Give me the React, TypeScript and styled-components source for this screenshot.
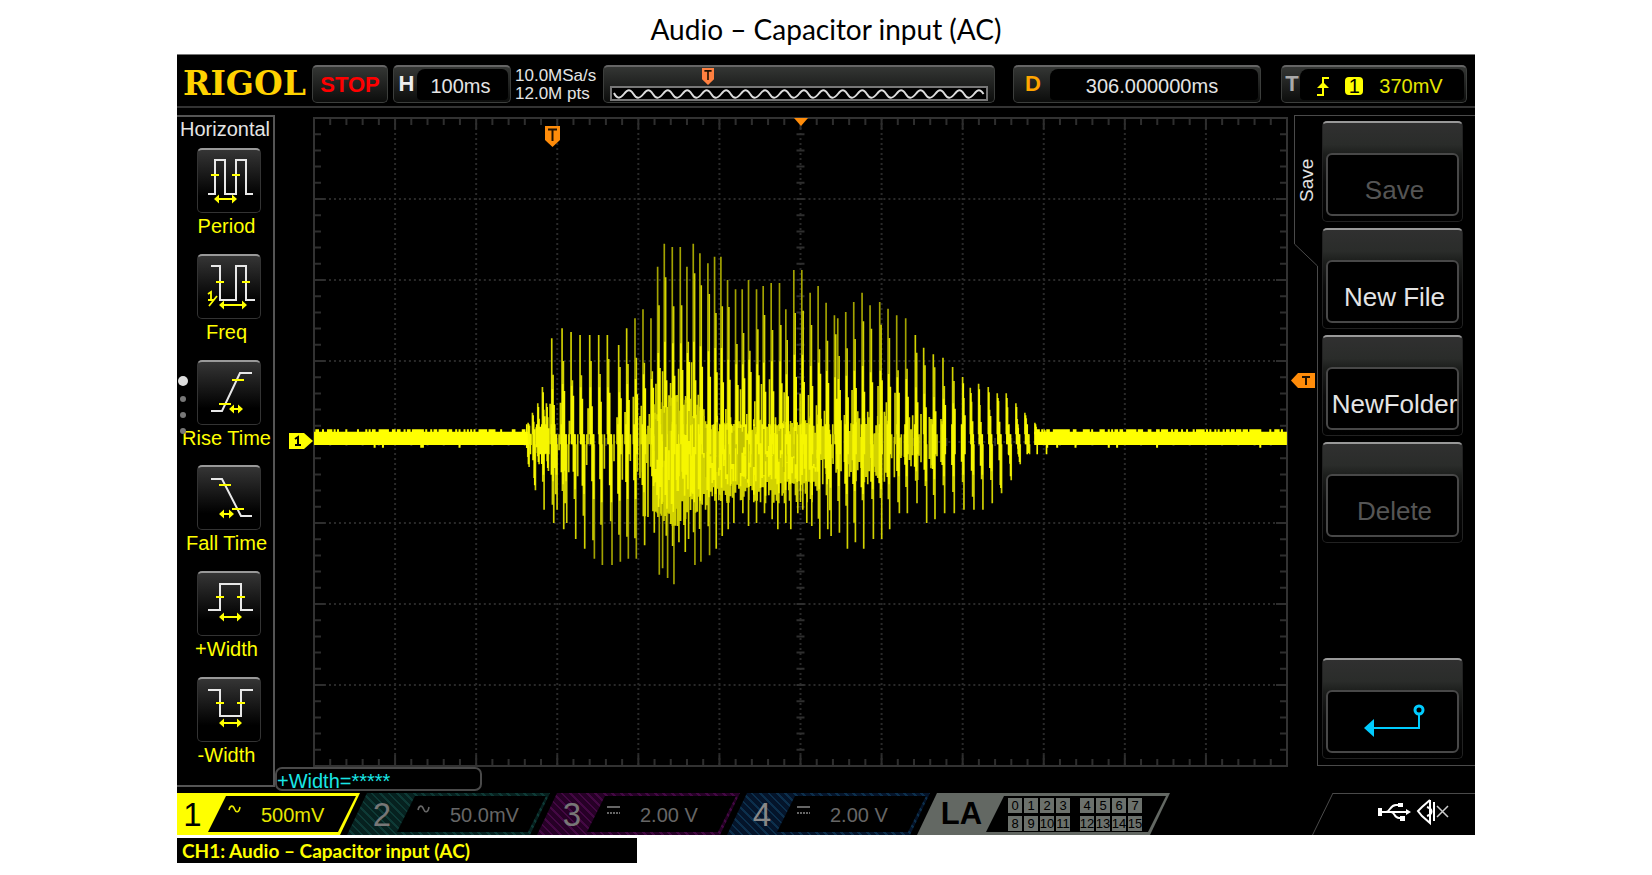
import React from "react";
import styled, { createGlobalStyle } from "styled-components";

const yellow = "#ffff00";
const orange = "#ff8c0a";
const line = "#4a4a4a";

const GlobalStyle = createGlobalStyle`
  *, *::before, *::after { box-sizing: border-box; }
  body {
    margin: 0;
    background: #fff;
    font-family: "Liberation Sans", Arial, sans-serif;
  }
  button { font: inherit; color: inherit; margin: 0; padding: 0; border: 0; background: none; }
  svg { display: block; }
`;

const Page = styled.main`
  display: flex;
  flex-direction: column;
  min-height: 100vh;
  padding: 0 177px;
`;

const Title = styled.h1`
  margin: 0;
  height: 54px;
  text-align: center;
  font: 400 28px/58px Lato, Carlito, sans-serif;
  color: #000;
`;

const Screen = styled.section`
  display: flex;
  flex-direction: column;
  background: #000;
  border-top: 1px solid #777;
  color: #e4e4e4;
  font-size: 20px;
`;

/* ---------- top bar ---------- */

const TopBar = styled.header`
  display: flex;
  align-items: flex-end;
  height: 53px;
  padding: 0 8px 3px 6px;
  border-bottom: 2px solid #333;
`;

const Logo = styled.div`
  width: 129px;
  color: #ffd200;
  font: 700 33px/38px "DejaVu Serif", serif;
`;

const Box = styled.div`
  display: flex;
  align-items: stretch;
  height: 38px;
  padding: 2px;
  border: 1px solid #3c3e3c;
  border-top: 2px solid #666;
  border-radius: 5px;
  background: linear-gradient(#343634, #0c0d0c);
`;

const StopButton = styled(Box).attrs({ as: "button", type: "button" })`
  width: 76px;
  align-items: center;
  justify-content: center;
  color: #ff0000;
  font-weight: 700;
  font-size: 22px;
  line-height: 30px;
`;

const ReadingBox = styled(Box)<{ $width: number; $gap: number }>`
  width: ${(p) => p.$width}px;
  margin-left: ${(p) => p.$gap}px;
`;

const BoxTag = styled.span<{ $color: string; $width: number }>`
  width: ${(p) => p.$width}px;
  text-align: center;
  color: ${(p) => p.$color};
  font-weight: 700;
  font-size: 22px;
  line-height: 30px;
`;

const BoxValue = styled.span<{ $color?: string }>`
  display: flex;
  flex: 1;
  align-items: center;
  justify-content: center;
  gap: 16px;
  padding: 3px 4px 0 0;
  border-radius: 8px 6px 4px 4px;
  background: #000;
  color: ${(p) => p.$color ?? "#e4e4e4"};
  line-height: 30px;
`;

const SampleInfo = styled.div`
  width: 92px;
  padding-left: 4px;
  font-size: 17px;
  line-height: 18px;
  white-space: nowrap;
`;

const MemoryBox = styled(Box)`
  position: relative;
  flex: 1;
  align-items: flex-end;
  padding: 0 6px 1px;
`;

const MemoryTrigger = styled.svg`
  position: absolute;
  left: 25%;
  top: 1px;
`;

const SourceBadge = styled.span`
  width: 18px;
  border-radius: 4px;
  background: ${yellow};
  color: #000;
  line-height: 18px;
  text-align: center;
`;

/* ---------- middle ---------- */

const Middle = styled.div`
  display: flex;
  height: 685px;
`;

const Sidebar = styled.nav`
  position: relative;
  display: flex;
  flex-direction: column;
  width: 98px;
  margin: 7px 0 6px;
  border: 2px solid #555;
  border-left: 0;
`;

const SidebarTitle = styled.h2`
  margin: 0;
  padding-left: 3px;
  height: 31px;
  font-size: 20px;
  font-weight: 400;
  line-height: 24px;
  white-space: nowrap;
`;

const MeasureList = styled.div`
  display: flex;
  flex: 1;
  flex-direction: column;
  justify-content: space-between;
  padding-bottom: 17px;
`;

const MeasureButton = styled.button`
  display: flex;
  flex-direction: column;
  align-items: center;
  color: ${yellow};
  line-height: 26px;
  white-space: nowrap;
`;

const IconTile = styled.span`
  width: 64px;
  height: 65px;
  margin-left: 7px;
  border: 1px solid #333;
  border-top: 2px solid #999;
  border-radius: 5px;
  background: linear-gradient(#353535, #000 75%);
`;

const MeasureName = styled.span`
  padding-left: 3px;
`;

const PageDots = styled.div`
  position: absolute;
  left: 1px;
  top: 259px;
  display: flex;
  flex-direction: column;
  align-items: center;
  gap: 10px;
`;

const Dot = styled.i<{ $active?: boolean }>`
  width: ${(p) => (p.$active ? 10 : 6)}px;
  height: ${(p) => (p.$active ? 10 : 6)}px;
  border-radius: 50%;
  background: ${(p) => (p.$active ? "#ddd" : "#777")};
`;

const PlotColumn = styled.div`
  display: flex;
  flex: 1;
  flex-direction: column;
  padding-top: 9px;
`;

const Plot = styled.div`
  position: relative;
  height: 650px;
  margin: 0 6px 0 38px;
`;

const Marker = styled.svg<{ $left: string; $top: number }>`
  position: absolute;
  left: ${(p) => p.$left};
  top: ${(p) => p.$top}px;
`;

const Readout = styled.output`
  width: 207px;
  height: 24px;
  border: 2px solid #4a4a4a;
  border-radius: 7px;
  color: #19e6e6;
  line-height: 24px;
`;

/* ---------- soft-key menu ---------- */

const Menu = styled.aside`
  display: flex;
  width: 181px;
  margin: 7px 0 27px;
`;

const MenuTab = styled.div`
  display: flex;
  flex-direction: column;
  width: 24px;
`;

/* The label is turned half round, so its right and bottom borders show at the left and top. */
const MenuTabLabel = styled.h2`
  height: 129px;
  margin: 0;
  border: 0 solid ${line};
  border-width: 0 1px 1px 0;
  font-size: 19px;
  font-weight: 400;
  line-height: 23px;
  text-align: center;
  writing-mode: vertical-rl;
  transform: rotate(180deg);
`;

const MenuTabEdge = styled.div`
  flex: 1;
  border-right: 1px solid ${line};
`;

const MenuKeys = styled.div`
  display: flex;
  flex: 1;
  min-width: 0;
  flex-direction: column;
  gap: 6px;
  padding: 5px 12px 6px 4px;
  border: 1px solid ${line};
  border-width: 1px 0;
`;

const SoftKey = styled.button<{ $last?: boolean }>`
  display: flex;
  height: 101px;
  margin-top: ${(p) => (p.$last ? "auto" : 0)};
  padding: 30px 3px 4px;
  border: 1px solid #222;
  border-top: 2px solid #999;
  border-radius: 5px;
  background: linear-gradient(#303030, #2a2c2a 22%, #1c1e1c 32%, #0a0a0a 60%, #000);
  color: #e4e4e4;
  font-size: 26px;
  &:disabled { color: #555; }
`;

const SoftKeyFace = styled.span`
  display: flex;
  flex: 1;
  min-width: 0;
  height: 63px;
  align-items: center;
  justify-content: center;
  padding: 11px 0 0 4px;
  border: 2px solid #484848;
  border-radius: 6px;
  background: #000;
  white-space: nowrap;
`;

/* ---------- channel bar ---------- */

const ChannelBar = styled.footer`
  display: flex;
  height: 42px;
`;

const ChannelShape = styled.button<{ $fill: string; $first?: boolean; $width: number }>`
  display: flex;
  width: ${(p) => p.$width}px;
  height: 42px;
  margin-left: ${(p) => (p.$first ? 0 : -13)}px;
  padding: 3px 4px 3px 0;
  background: ${(p) => p.$fill};
  clip-path: polygon(${(p) => (p.$first ? 0 : 20)}px 0, 100% 0, calc(100% - 20px) 100%, 0 100%);
`;

const ChannelNumber = styled.span<{ $color: string; $first?: boolean }>`
  width: ${(p) => (p.$first ? 31 : 50)}px;
  padding-left: ${(p) => (p.$first ? 0 : 20)}px;
  color: ${(p) => p.$color};
  font-size: 33px;
  line-height: 38px;
  text-align: center;
`;

const ChannelBody = styled.span<{ $color: string }>`
  display: flex;
  flex: 1;
  height: 36px;
  gap: 20px;
  padding-left: 20px;
  background: #000;
  clip-path: polygon(18px 0, 100% 0, calc(100% - 18px) 100%, 0 100%);
  color: ${(p) => p.$color};
  line-height: 38px;
`;

const LogicName = styled.span`
  width: 69px;
  padding-left: 20px;
  color: #000;
  font-size: 31px;
  font-weight: 700;
  line-height: 36px;
`;

const LogicBody = styled.span`
  display: grid;
  flex: 1;
  grid-template-columns: repeat(4, 14px) 6px repeat(4, 14px);
  gap: 3px 2px;
  align-content: center;
  padding-left: 22px;
  background: #000;
  clip-path: polygon(18px 0, 100% 0, calc(100% - 18px) 100%, 0 100%);
`;

const Bit = styled.span<{ $column: number }>`
  display: flex;
  grid-column: ${(p) => p.$column};
  height: 15px;
  justify-content: center;
  background: #6c716c;
  color: #000;
  font-size: 13px;
  line-height: 15px;
`;

const Status = styled.div`
  display: flex;
  align-items: stretch;
  margin-left: auto;
  width: 163px;
`;

const StatusIcons = styled.div`
  display: flex;
  flex: 1;
  gap: 5px;
  padding: 3px 0 0 45px;
  border-top: 1px solid ${line};
`;

const Caption = styled.p`
  width: 460px;
  max-width: 100%;
  margin: 3px 0 0;
  padding-left: 5px;
  background: #000;
  color: ${yellow};
  font: 700 19px/25px Lato, Carlito, sans-serif;
`;

/* ---------- drawings ---------- */

const Arrow = ({ from, to, y }: { from: number; to: number; y: number }) => (
  <g>
    <path d={`M${from + 3} ${y}H${to - 3}`} stroke={yellow} strokeWidth="2" />
    <path
      d={`M${from} ${y}l5 -4.500v9zM${to} ${y}l-5 -4.500v9z`}
      fill={yellow}
    />
  </g>
);

type Measure = {
  name: string;
  wave: string;
  ticks: string;
  arrow: [number, number, number];
  inverse?: boolean;
};

const measures: Measure[] = [
  { name: "Period", wave: "M11 46H18V12H28V46H39V12H49V46H56", ticks: "M14 27h8M35 27h8", arrow: [17, 40, 51] },
  { name: "Freq", wave: "M14 12H23V46H39V12H49V46H58", ticks: "M19 28h8M45 28h8", arrow: [22, 50, 51], inverse: true },
  { name: "Rise Time", wave: "M14 51H25L43 13H55", ticks: "M35 20h12M22 44h12", arrow: [32, 46, 49] },
  { name: "Fall Time", wave: "M14 14H25L44 51H55", ticks: "M22 20h12M35 44h12", arrow: [22, 37, 49] },
  { name: "+Width", wave: "M11 39H23V13H44V39H56", ticks: "M19 26h8M40 26h8", arrow: [22, 45, 46] },
  { name: "-Width", wave: "M11 13H23V39H44V13H56", ticks: "M19 26h8M40 26h8", arrow: [22, 45, 46] },
];

const MeasureIcon = ({ m }: { m: Measure }) => (
  <svg width="62" height="62" viewBox="1 2 62 62" fill="none" aria-hidden="true">
    <path d={m.wave} stroke="#e8e8e8" strokeWidth="2" />
    <path d={m.ticks} stroke={yellow} strokeWidth="2" />
    <Arrow from={m.arrow[0]} to={m.arrow[1]} y={m.arrow[2]} />
    {m.inverse && (
      <path d="M11 40l3 -2v8M11 46h6M12 52l8 -10" stroke={yellow} strokeWidth="1.800" />
    )}
  </svg>
);

/* Spike extremes of the captured burst as x, y pairs. */
const peaks = [
  55, 575, 68, 545, 84, 517, 98, 468, 110, 517, 126, 322, 157, 292, 184, 303, 211, 312, 240, 312, 267, 312,
  293, 312, 327, 342, 351, 292, 376, 262, 400, 235, 424, 262, 444, 107, 464, 38, 488, 48, 512, 48, 532, 107,
  551, 38, 571, 67, 595, 97, 615, 77, 634, 77, 654, 147, 678, 175, 698, 175, 717, 147, 741, 175, 761, 165,
  785, 156, 810, 156, 829, 235, 853, 117, 877, 117, 902, 185, 926, 165, 950, 215, 975, 253, 985, 262, 1009,
  243, 1033, 213, 1058, 185, 1082, 223, 1111, 213, 1136, 233, 1162, 253, 1189, 262, 1218, 312, 1243, 350,
  1272, 370, 1301, 380, 1330, 408, 1360, 438, 1383, 470, 1408, 458, 1437, 468, 1464, 487, 1491, 487, 1520,
  517, 1547, 545, 1577, 575, 1605, 595,
];
const troughs = [
  58, 708, 77, 778, 88, 700, 103, 836, 116, 720, 132, 876, 142, 836, 162, 895, 171, 876, 198, 924, 225, 953,
  254, 983, 278, 1002, 307, 1002, 332, 992, 356, 983, 380, 983, 405, 943, 434, 905, 449, 1031, 459, 1012,
  474, 1041, 493, 1060, 508, 934, 527, 963, 537, 924, 556, 1002, 574, 992, 600, 973, 620, 953, 638, 915,
  656, 895, 673, 876, 700, 847, 717, 885, 741, 876, 765, 847, 788, 865, 805, 895, 829, 876, 844, 895, 865,
  847, 880, 836, 892, 876, 907, 885, 931, 924, 955, 895, 965, 915, 990, 905, 1014, 953, 1038, 934, 1063, 953,
  1092, 924, 1117, 924, 1141, 895, 1170, 847, 1194, 847, 1223, 817, 1252, 876, 1277, 865, 1306, 847, 1335,
  847, 1364, 836, 1394, 836, 1421, 836, 1449, 817, 1477, 787, 1506, 748, 1533, 700, 1561, 670,
];

const noise = (n: number) => {
  const v = Math.sin(n * 12.9898) * 43758.5453;
  return v - Math.floor(v);
};

const bar = (x: number, y1: number, y2: number) => `M${x} ${Math.round(y1)}V${Math.round(y2)}`;

const buildTrace = () => {
  const tips: string[] = [];
  const flanks: string[] = [];
  const bright: string[] = [];
  const shade: string[] = [];
  const mid = 625;

  const addSpikes = (points: number[], down: boolean) => {
    for (let i = 0; i < points.length; i += 2) {
      const x = points[i];
      const d = points[i + 1] - mid;
      const over = down ? -15 : 15;
      const small = Math.abs(d) < 190;
      (Math.abs(d) < 345 ? flanks : tips).push(bar(x, mid + d, mid - over));
      flanks.push(bar(x + (down ? -4 : 4), mid + d * (0.55 + noise(x) * 0.3), mid + over));
      bright.push(bar(x + (down ? -2 : 2), mid + d * (small ? 0.9 : 0.5), mid + over));
      bright.push(bar(x + (down ? -7 : 7), mid + d * (0.3 + noise(x + 3) * 0.15), mid + over * 3));
      if (x < 1300 && noise(x + 4) > 0.3) {
        flanks.push(bar(x + (down ? 6 : -5), mid + d * (0.15 + noise(x + 9) * 0.25), mid + over));
      }
    }
  };
  addSpikes(peaks, false);
  addSpikes(troughs, true);

  /* The dense body of the burst, where neighbouring cycles overlap. */
  for (let x = 383; x < 433; x += 8) {
    flanks.push(bar(x, 540 + noise(x) * 70, 700 + noise(x + 1) * 180));
  }
  for (let x = 433; x < 925; x += 5) {
    const early = Math.max(0, 1 - Math.abs(x - 490) / 130);
    const t = 550 - early * 80 + noise(x) * 60;
    const b = 750 + early * 70 + noise(x + 1) * 70;
    flanks.push(bar(x, t, b));
    if (noise(x + 5) > 0.5 - (x - 433) / 2500) {
      bright.push(bar(x, t + 60 + noise(x + 3) * 60, b - 20 - 90 * noise(x + 6)));
    }
    if (noise(x + 7) > 0.7) shade.push(bar(x, t + 20, t + 70 + noise(x + 8) * 120));
  }
  for (let x = 925; x < 1310; x += 5) {
    if (noise(x + 2) > 0.1 + (x - 925) / 900) {
      flanks.push(bar(x, 540 + noise(x) * 80, 670 + noise(x + 1) * 90));
    }
  }
  return { tips: tips.join(""), flanks: flanks.join(""), bright: bright.join(""), shade: shade.join("") };
};

const buildBaseline = () => {
  const out: string[] = [];
  for (let x = -586; x < 2334; x += 5) {
    if (x > 50 && x < 1580) continue;
    if (noise(x) > 0.45) out.push(bar(x, 595, 610));
    if (noise(x) > 0.97) out.push(bar(x, 630, 650));
  }
  return out.join("");
};

const trace = buildTrace();
const baseline = buildBaseline();

const W = 974;
const H = 648;

const gridPaths = () => {
  let dotted = "";
  let ticks = "";
  for (let i = 1; i < 12; i++) dotted += `M${(W * i) / 12} 0V${H}`;
  for (let j = 1; j < 8; j++) dotted += `M0 ${(H * j) / 8}H${W}`;
  for (let i = 1; i < 60; i++) {
    const x = (W * i) / 60;
    const len = i % 5 === 0 ? 11 : 7;
    ticks += `M${x} 0v${len}M${x} ${H}v-${len}M${x} ${H / 2 - 4}v8`;
  }
  for (let j = 1; j < 40; j++) {
    const y = (H * j) / 40;
    const len = j % 5 === 0 ? 11 : 7;
    ticks += `M0 ${y}h${len}M${W} ${y}h-${len}M${W / 2 - 4} ${y}h8`;
  }
  return { dotted, ticks };
};
const grid = gridPaths();

const Graph = () => (
  <svg width="100%" height="650" viewBox="-1 -1 976 650" preserveAspectRatio="none" fill="none" role="img" aria-label="Channel 1 waveform">
    <path d={grid.dotted} stroke="#292929" strokeWidth="2" strokeDasharray="2 3" />
    <path d={grid.ticks} stroke="#2e2e2e" strokeWidth="2" />
    <rect width={W} height={H} stroke="#323232" strokeWidth="2" />
    <g transform="translate(196 113) scale(0.3333)" strokeWidth="5">
      <path d={trace.tips} stroke="#a3a300" />
      <path d={trace.flanks} stroke="#d2d200" />
      <path d={trace.bright} stroke="#f6f600" />
      <path d={trace.shade} stroke="#c2c200" />
      <path d="M-588 622H54M1575 622H2334" stroke={yellow} strokeWidth="40" />
      <path d={baseline} stroke={yellow} strokeWidth="6" />
    </g>
  </svg>
);

const memoryWave = () => {
  let d = "M0 5";
  for (let i = 0; i < 19; i++) {
    const x = i * 19.5;
    d += `C${x + 3} 11 ${x + 6} 11 ${x + 10} 6S${x + 16} 1 ${x + 19.5} 6`;
  }
  return d;
};

const TriggerFlag = ({ color }: { color: string }) => (
  <>
    <path d="M0 0H15V14L7.500 21L0 14Z" fill={color} />
    <path d="M3 3.500H12M7.500 3.500V15" stroke="#201000" strokeWidth="2" fill="none" />
  </>
);

const AcIcon = () => (
  <svg width="13" height="36" viewBox="0 0 13 36" fill="none" aria-label="AC">
    <path d="M1 14C2 9 5 9 6.500 13S11 17 12 11" stroke="currentColor" strokeWidth="1.600" />
  </svg>
);

const DcIcon = () => (
  <svg width="13" height="36" viewBox="0 0 13 36" fill="none" aria-label="DC">
    <path d="M0 11H13" stroke="currentColor" strokeWidth="2" />
    <path d="M0 17H13" stroke="currentColor" strokeWidth="2" strokeDasharray="2 1" />
  </svg>
);

const hatch = (a: string, b: string) => `repeating-linear-gradient(45deg, ${a} 0 4px, ${b} 4px 6px)`;

const channels = [
  { id: 1, value: "500mV", ac: true, fill: yellow, number: "#000", text: "#e6e600", width: 183 },
  { id: 2, value: "50.0mV", ac: true, fill: hatch("#06211f", "#0e3a36"), number: "#777", text: "#666", width: 203 },
  { id: 3, value: "2.00 V", ac: false, fill: hatch("#260026", "#430843"), number: "#777", text: "#666", width: 203 },
  { id: 4, value: "2.00 V", ac: false, fill: hatch("#04142a", "#0c2f4c"), number: "#888", text: "#666", width: 203 },
];

const bits = Array.from({ length: 16 }, (_, i) => i);

const softKeys = [
  { name: "Save", disabled: true },
  { name: "New File", disabled: false },
  { name: "NewFolder", disabled: false },
  { name: "Delete", disabled: true },
];

export default function App() {
  return (
    <Page>
      <GlobalStyle />
      <Title>Audio – Capacitor input (AC)</Title>
      <Screen>
        <TopBar>
          <Logo>RIGOL</Logo>
          <StopButton>STOP</StopButton>
          <ReadingBox $width={118} $gap={5}>
            <BoxTag $color="#eee" $width={21}>H</BoxTag>
            <BoxValue>100ms</BoxValue>
          </ReadingBox>
          <SampleInfo>
            10.0MSa/s
            <br />
            12.0M pts
          </SampleInfo>
          <MemoryBox>
            <svg width="100%" height="15" viewBox="0 0 379 15" preserveAspectRatio="none" fill="none" aria-hidden="true">
              <rect x="1" y="1" width="377" height="13" fill="#000" stroke="#777" strokeWidth="2" />
              <path d={memoryWave()} transform="translate(4 2)" stroke="#ddd" strokeWidth="2" />
            </svg>
            <MemoryTrigger width="12" height="17" viewBox="0 0 15 21" aria-hidden="true">
              <TriggerFlag color="#ff8040" />
            </MemoryTrigger>
          </MemoryBox>
          <ReadingBox $width={248} $gap={18}>
            <BoxTag $color="#ffa500" $width={34}>D</BoxTag>
            <BoxValue>306.000000ms</BoxValue>
          </ReadingBox>
          <ReadingBox $width={186} $gap={20}>
            <BoxTag $color="#aaa" $width={16}>T</BoxTag>
            <BoxValue $color="#e6e600">
              <svg width="12" height="19" viewBox="0 0 12 19" fill="none" aria-label="Rising edge">
                <path d="M0 18H6V1H12" stroke={yellow} strokeWidth="2" />
                <path d="M6 5L12 11H0Z" fill={yellow} />
              </svg>
              <SourceBadge>1</SourceBadge>
              <span>370mV</span>
            </BoxValue>
          </ReadingBox>
        </TopBar>

        <Middle>
          <Sidebar>
            <SidebarTitle>Horizontal</SidebarTitle>
            <MeasureList>
              {measures.map((m) => (
                <MeasureButton key={m.name} type="button">
                  <IconTile>
                    <MeasureIcon m={m} />
                  </IconTile>
                  <MeasureName>{m.name}</MeasureName>
                </MeasureButton>
              ))}
            </MeasureList>
            <PageDots>
              <Dot $active />
              <Dot />
              <Dot />
              <Dot />
            </PageDots>
          </Sidebar>

          <PlotColumn>
            <Plot>
              <Graph />
              <Marker $left="calc(24% - 2px)" $top={9} width="15" height="21" viewBox="0 0 15 21" aria-hidden="true">
                <TriggerFlag color={orange} />
              </Marker>
              <Marker $left="calc(50% - 7px)" $top={1} width="14" height="8" viewBox="0 0 14 8" aria-hidden="true">
                <path d="M0 0H14L7 8Z" fill={orange} />
              </Marker>
              <Marker $left="-24px" $top={316} width="24" height="16" viewBox="0 0 24 16" aria-hidden="true">
                <path d="M0 0H15L24 8L15 16H0Z" fill={yellow} />
                <path d="M6 6L9 4V12M6 12H12" stroke="#000" strokeWidth="2" fill="none" />
              </Marker>
              <Marker $left="calc(100% + 3px)" $top={256} width="24" height="15" viewBox="0 0 24 15" aria-hidden="true">
                <path d="M24 0H7L0 7.500L7 15H24Z" fill={orange} />
                <path d="M11 4H19M15 4V12" stroke="#201000" strokeWidth="2" fill="none" />
              </Marker>
            </Plot>
            <Readout>+Width=*****</Readout>
          </PlotColumn>

          <Menu>
            <MenuTab>
              <MenuTabLabel>Save</MenuTabLabel>
              <svg width="24" height="22" viewBox="0 0 24 22" aria-hidden="true">
                <path d="M0.500 0L23.500 22" stroke={line} />
              </svg>
              <MenuTabEdge />
            </MenuTab>
            <MenuKeys>
              {softKeys.map((k) => (
                <SoftKey key={k.name} type="button" disabled={k.disabled}>
                  <SoftKeyFace>{k.name}</SoftKeyFace>
                </SoftKey>
              ))}
              <SoftKey type="button" $last aria-label="Back">
                <SoftKeyFace>
                  <svg width="61" height="46" viewBox="0 0 61 46" fill="none" aria-hidden="true">
                    <path d="M8 24H55V11" stroke="#00ccff" strokeWidth="2" />
                    <path d="M0 24L10 15V33Z" fill="#00ccff" />
                    <circle cx="55" cy="6" r="4" stroke="#00ccff" strokeWidth="3" />
                  </svg>
                </SoftKeyFace>
              </SoftKey>
            </MenuKeys>
          </Menu>
        </Middle>

        <ChannelBar>
          {channels.map((c) => (
            <ChannelShape key={c.id} type="button" $fill={c.fill} $first={c.id === 1} $width={c.width}>
              <ChannelNumber $color={c.number} $first={c.id === 1}>{c.id}</ChannelNumber>
              <ChannelBody $color={c.text}>
                {c.ac ? <AcIcon /> : <DcIcon />}
                <span>{c.value}</span>
              </ChannelBody>
            </ChannelShape>
          ))}
          <ChannelShape type="button" $fill="#636863" $width={253}>
            <LogicName>LA</LogicName>
            <LogicBody>
              {bits.map((b) => (
                <Bit key={b} $column={(b % 8) + (b % 8 > 3 ? 2 : 1)}>{b}</Bit>
              ))}
            </LogicBody>
          </ChannelShape>
          <Status>
            <svg width="21" height="42" viewBox="0 0 21 42" aria-hidden="true">
              <path d="M0.500 42L21 0" stroke={line} />
            </svg>
            <StatusIcons>
              <svg width="33" height="30" viewBox="0 0 33 30" fill="none" aria-label="USB">
                <path d="M3 15H30M8 15C12 15 12 8 18 8H22M13 15C17 15 16 21 21 21H24" stroke="#fff" strokeWidth="2" />
                <path d="M0 11H4V19H0ZM20 6H25V10H20ZM22 19H27V24H22ZM28 12L33 15L28 18Z" fill="#fff" />
              </svg>
              <svg width="34" height="30" viewBox="0 0 34 30" fill="none" aria-label="Sound off">
                <path d="M14 3L6 10L2 14L6 19L14 26V3M18 5V24M11 10C17 12 17 17 11 19" stroke="#fff" strokeWidth="2" />
                <path d="M21 9L32 20M32 9L21 20" stroke="#ccc" strokeWidth="1.500" />
              </svg>
            </StatusIcons>
          </Status>
        </ChannelBar>
      </Screen>
      <Caption>CH1: Audio – Capacitor input (AC)</Caption>
    </Page>
  );
}
